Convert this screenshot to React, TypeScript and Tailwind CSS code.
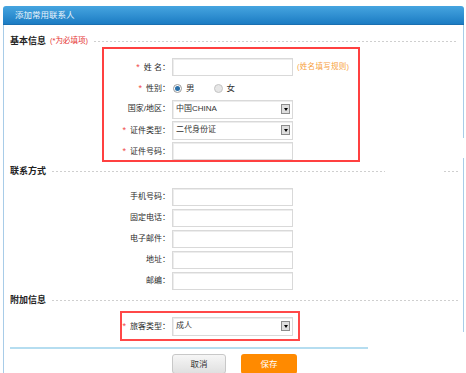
import type { ReactNode } from 'react';

const font = "font-['Liberation_Sans','Noto_Sans_CJK_SC',sans-serif]";

function Heading({ title, hint }: { title: string; hint?: string }) {
  return (
    <div className="flex items-center h-[12px]">
      <span className="text-[9px] font-bold text-[#222] leading-none">{title}</span>
      {hint && <span className="ml-[4px] text-[7.5px] text-[#e53333] leading-none">{hint}</span>}
      <div className="flex-1 ml-[6px] h-px bg-[linear-gradient(to_right,#cfcfcf_50%,transparent_50%)] bg-[length:4px_1px]" />
    </div>
  );
}

function Label({ text, star, w }: { text: string; star?: boolean; w: string }) {
  return (
    <div className={`${w} shrink-0 text-right text-[8px] text-[#2b2b2b] leading-none whitespace-nowrap`}>
      {star && <span className="text-[9px] text-[#f04848] mr-[4px]">*</span>}
      {text}
    </div>
  );
}

function Input() {
  return <div className="w-[121px] h-[18px] border border-[#d9d9d9] bg-white shadow-[inset_1px_1px_0_#ededed]" />;
}

function Select({ value }: { value: string }) {
  return (
    <div className="w-[121px] h-[19px] border border-[#d9d9d9] bg-white shadow-[inset_1px_1px_0_#ededed] flex items-center justify-between pl-[3px] pr-[2px]">
      <span className="text-[8px] text-[#333] leading-none">{value}</span>
      <div className="w-[9px] h-[10px] border border-[#8c8c8c] bg-[#dedede] flex items-center justify-center">
        <div className="w-0 h-0 border-l-[2.5px] border-r-[2.5px] border-t-[3px] border-l-transparent border-r-transparent border-t-black" />
      </div>
    </div>
  );
}

function Row({ label, star, w, children }: { label: string; star?: boolean; w: string; children: ReactNode }) {
  return (
    <div className="flex items-center h-[18px] gap-[2px]">
      <Label text={label} star={star} w={w} />
      {children}
    </div>
  );
}

function Radio({ on, text }: { on?: boolean; text: string }) {
  return (
    <div className="flex items-center gap-[4px]">
      <div
        className={
          on
            ? 'w-[9px] h-[9px] rounded-full border border-[#9a9a9a] bg-white flex items-center justify-center'
            : 'w-[9px] h-[9px] rounded-full border border-[#c4c4c4] bg-[#e6e6e6]'
        }
      >
        {on && <div className="w-[5px] h-[5px] rounded-full bg-[#2a6fa8]" />}
      </div>
      <span className="text-[8.5px] text-[#333] leading-none">{text}</span>
    </div>
  );
}

export default function App() {
  return (
    <div className={`relative w-[466px] h-[373px] overflow-hidden bg-white pt-[6px] pl-[3px] ${font}`}>
      <div className="w-[461px]">
        <div className="h-[19px] rounded-t-[3px] bg-[linear-gradient(#46a5e0,#1c7cc3)] border-b border-[#1a6fb0] pl-[12px] flex items-center">
          <span className="text-[8.5px] text-[#eaf4fc] leading-none">添加常用联系人</span>
        </div>
        <div className="border-x border-[#a8cce8] pl-[6px] pr-[5px] pb-[20px]">
          <div className="pt-[10px]">
            <Heading title="基本信息" hint="(*为必填项)" />
          </div>
          <div className="ml-[92px] w-[258px] border-2 border-[#ff4040] pt-[9px] flex flex-col gap-[3px]">
            <Row label="姓 名：" star w="w-[66px]">
              <Input />
              <span className="ml-[2px] text-[7.5px] tracking-[0.3px] text-[#f7a040] leading-none whitespace-nowrap">(姓名填写规则)</span>
            </Row>
            <Row label="性别：" star w="w-[66px]">
              <div className="flex items-center gap-[19px] pl-[1px]">
                <Radio on text="男" />
                <Radio text="女" />
              </div>
            </Row>
            <Row label="国家/地区：" w="w-[66px]">
              <Select value="中国CHINA" />
            </Row>
            <Row label="证件类型：" star w="w-[66px]">
              <Select value="二代身份证" />
            </Row>
            <Row label="证件号码：" star w="w-[66px]">
              <Input />
            </Row>
          </div>

          <div className="mt-[3px]">
            <Heading title="联系方式" />
          </div>
          <div className="mt-[11px] flex flex-col gap-[3px]">
            {['手机号码：', '固定电话：', '电子邮件：', '地址：', '邮编：'].map(l => (
              <Row key={l} label={l} w="w-[160px]">
                <Input />
              </Row>
            ))}
          </div>

          <div className="mt-[4px]">
            <Heading title="附加信息" />
          </div>
          <div className="mt-[5px] ml-[110px] w-[180px] border-2 border-[#ff4848] py-[4px] pr-[5px]">
            <Row label="旅客类型：" star w="w-[48px]">
              <Select value="成人" />
            </Row>
          </div>

          <div className="mt-[6px] h-[2px] bg-[#b5ddf0]" />

          <div className="mt-[5px] ml-[162px] flex gap-[15px]">
            <button className="w-[54px] h-[20px] rounded-[3px] border border-[#c8c8c8] bg-[linear-gradient(#f6f6f6,#e0e0e0)] text-[8.5px] text-[#333] leading-none">
              取消
            </button>
            <button className="w-[56px] h-[20px] rounded-[3px] bg-[#ff8a00] text-[8.5px] text-white leading-none">
              保存
            </button>
          </div>
        </div>
      </div>

      {/* watermark wash over the bottom-right corner */}
      <div className="absolute left-[368px] top-[332px] w-[98px] h-[41px] bg-white" />
      <div className="absolute left-[385px] top-[166px] w-[58px] h-[10px] bg-white" />
      <div className="absolute left-[460px] top-[138px] w-[6px] h-[20px] bg-white" />
    </div>
  );
}
